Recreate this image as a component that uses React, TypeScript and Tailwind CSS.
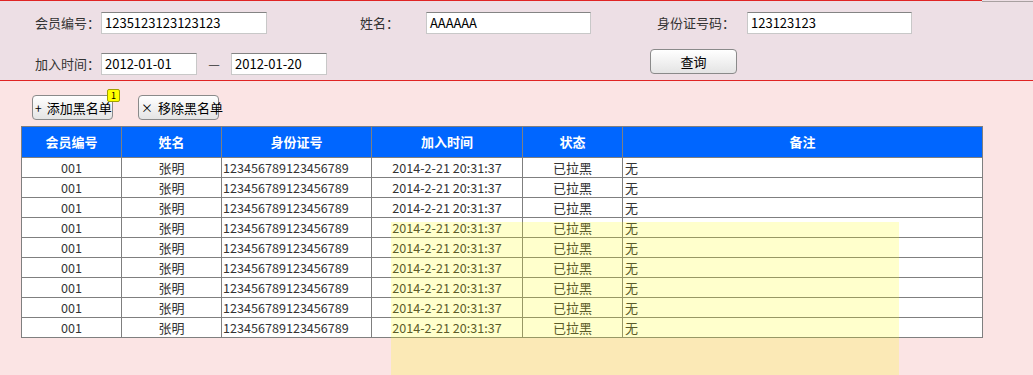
import React from "react";

const rows = Array.from({ length: 9 }, () => ({
  id: "001",
  name: "张明",
  card: "123456789123456789",
  joined: "2014-2-21 20:31:37",
  status: "已拉黑",
  note: "无",
}));

const font = "font-['Microsoft_YaHei','Noto_Sans_CJK_SC',sans-serif]";

function Field({ value, width }: { value: string; width: string }) {
  return (
    <div
      className={`${width} flex h-[22px] items-center border border-[#c8c8c8] border-t-[#848484] bg-white pl-[3px] text-[13px] text-black`}
    >
      {value}
    </div>
  );
}

function ToolButton({ icon, label, badge }: { icon: string; label: string; badge?: string }) {
  return (
    <button className="relative flex h-[25px] w-[81px] items-center gap-[5px] whitespace-nowrap rounded-[4px] border border-[#8a8a8a] bg-gradient-to-b from-white to-[#e4e4e4] pl-[2px] text-[13px] text-black">
      <span className="text-[12px]">{icon}</span>
      <span>{label}</span>
      {badge ? (
        <span className="absolute left-[74px] top-[-7px] flex size-[13px] items-center justify-center rounded-[2px] border border-[#a0a000] bg-[#ffff00] text-[9px] leading-none text-black">
          {badge}
        </span>
      ) : null}
    </button>
  );
}

export default function App() {
  return (
    <div className={`relative min-h-[375px] w-[1033px] overflow-hidden bg-[#fbe4e4] ${font} text-[#333]`}>
      <header className="bg-[#eddfe5]">
        <div className="flex h-[2px]">
          <div className="h-px w-[982px] bg-[#e02424]" />
          <div className="mt-px h-px flex-1 bg-[#a8a0a0]" />
        </div>
        <div className="mt-[10px] flex h-[22px] items-center text-[13px]">
          <span className="w-[101px] pl-[35px]">会员编号：</span>
          <Field value="1235123123123123" width="w-[166px]" />
          <span className="ml-[93px] w-[66px]">姓名：</span>
          <Field value="AAAAAA" width="w-[165px]" />
          <span className="ml-[66px] w-[90px]">身份证号码：</span>
          <Field value="123123123" width="w-[165px]" />
        </div>
        <div className="mt-[15px] flex h-[31px] items-start text-[13px]">
          <span className="mt-[4px] flex h-[22px] w-[101px] items-center pl-[35px]">加入时间：</span>
          <div className="mt-[4px]">
            <Field value="2012-01-01" width="w-[96px]" />
          </div>
          <span className="mt-[4px] flex h-[22px] w-[34px] items-center justify-center">—</span>
          <div className="mt-[4px]">
            <Field value="2012-01-20" width="w-[96px]" />
          </div>
          <button className="ml-[323px] h-[25px] w-[87px] rounded-[4px] border border-[#8a8a8a] bg-gradient-to-b from-white to-[#e4e4e4] text-[13px] text-black">
            查询
          </button>
        </div>
        <div className="h-px bg-[#e02424]" />
      </header>

      <div className="mt-[14px] flex gap-[25px] pl-[32px]">
        <ToolButton icon="+" label="添加黑名单" badge="1" />
        <ToolButton icon="×" label="移除黑名单" />
      </div>

      <table className="ml-[21px] mt-[6px] w-[961px] table-fixed border-collapse text-[13px]">
        <colgroup>
          <col className="w-[100px]" />
          <col className="w-[100px]" />
          <col className="w-[150px]" />
          <col className="w-[151px]" />
          <col className="w-[100px]" />
          <col className="w-[360px]" />
        </colgroup>
        <thead>
          <tr className="h-[31px] bg-[#0066ff] font-bold text-white">
            {["会员编号", "姓名", "身份证号", "加入时间", "状态", "备注"].map((h) => (
              <th key={h} className="border border-[#7f7f7f] p-0 text-center">
                {h}
              </th>
            ))}
          </tr>
        </thead>
        <tbody className="bg-white text-[12.6px]">
          {rows.map((r, i) => (
            <tr key={i} className="h-[20px] leading-[17px]">
              <td className="border border-[#7f7f7f] p-0 pb-[1px] text-center">{r.id}</td>
              <td className="border border-[#7f7f7f] p-0 pb-[1px] text-center text-[13px]">{r.name}</td>
              <td className="border border-[#7f7f7f] p-0 pb-[1px] pl-[1px] text-left">{r.card}</td>
              <td className="border border-[#7f7f7f] p-0 pb-[1px] text-center">{r.joined}</td>
              <td className="border border-[#7f7f7f] p-0 pb-[1px] text-center text-[13px]">{r.status}</td>
              <td className="border border-[#7f7f7f] p-0 pb-[1px] pl-[2px] text-left text-[13px]">{r.note}</td>
            </tr>
          ))}
        </tbody>
      </table>

      <div className="pointer-events-none absolute left-[391px] top-[222px] h-[153px] w-[508px] bg-[#ffff00]/20" />
    </div>
  );
}
